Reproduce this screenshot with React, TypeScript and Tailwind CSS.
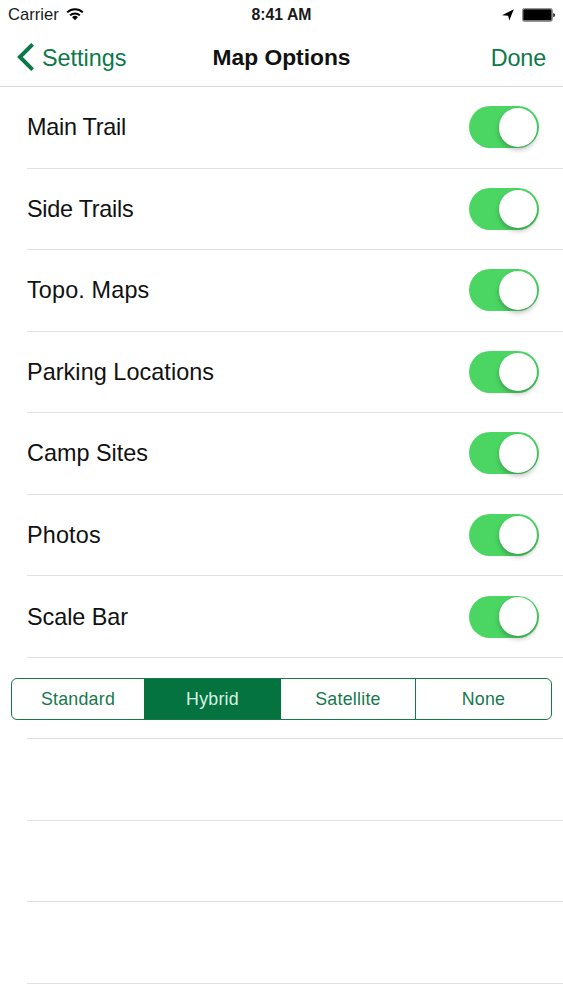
const options = [
  { label: 'Main Trail', tracking: 'tracking-[-0.25px]' },
  { label: 'Side Trails', tracking: 'tracking-[-0.25px]' },
  { label: 'Topo. Maps', tracking: 'tracking-[0.15px]' },
  { label: 'Parking Locations', tracking: 'tracking-[0.07px]' },
  { label: 'Camp Sites', tracking: 'tracking-normal' },
  { label: 'Photos', tracking: 'tracking-[0.15px]' },
  { label: 'Scale Bar', tracking: 'tracking-[-0.05px]' },
];

const mapTypes = [
  { label: 'Standard', width: 'w-[132px]' },
  { label: 'Hybrid', width: 'w-[137px]' },
  { label: 'Satellite', width: 'w-[134px]' },
  { label: 'None', width: 'flex-1' },
];

function StatusBar() {
  return (
    <div className="grid h-7 grid-cols-3 items-center px-2">
      <div className="flex items-center gap-[7px]">
        <span className="pt-px text-[16.6px] leading-7 text-[#1a1a1a]">Carrier</span>
        <svg className="h-[13px] w-[18px]" viewBox="0 0 18 13" fill="none" stroke="#000" strokeWidth="2">
          <path d="M1.2 4.4a11.1 11.1 0 0 1 15.6 0" />
          <path d="M4.1 7.4a7 7 0 0 1 9.8 0" />
          <path d="M9 12.2 6.1 9.3a4.1 4.1 0 0 1 5.8 0Z" fill="#000" stroke="none" />
        </svg>
      </div>
      <span className="pt-px text-center text-[15.8px] leading-7 font-bold text-[#1a1a1a]">8:41 AM</span>
      <div className="flex items-center justify-end gap-2">
        <svg className="h-3 w-3" viewBox="0 0 12 12" fill="#000">
          <path d="M11.8.3 7.3 11.6 6.2 6.7 0 6.3Z" />
        </svg>
        <svg className="h-[14px] w-[33px]" viewBox="0 0 33 14">
          <rect x="0.4" y="0.4" width="30" height="13" rx="2" fill="#fff" stroke="#555" strokeWidth="0.7" />
          <rect x="1.2" y="1.2" width="28.4" height="11.4" rx="1.2" fill="#000" />
          <path d="M31.3 4.9a2.3 2.3 0 0 1 0 4.4Z" fill="#000" />
        </svg>
      </div>
    </div>
  );
}

function NavBar() {
  return (
    <div className="grid h-[58px] grid-cols-[1fr_auto_1fr] items-center pr-[17px] pl-[17px] text-[23.4px]">
      <button className="flex items-center gap-[7px] text-[#0c7849]">
        <svg className="h-[28px] w-[18px]" viewBox="0 0 18 28" fill="none" stroke="currentColor" strokeWidth="4">
          <path d="M15.6 1.4 2.9 14 15.6 26.6" />
        </svg>
        <span className="pt-[3px]">Settings</span>
      </button>
      <h1 className="pt-px text-[22.8px] font-bold text-[#111]">Map Options</h1>
      <button className="justify-self-end pt-[3px] tracking-[-0.15px] text-[#0c7849]">Done</button>
    </div>
  );
}

function Toggle() {
  return (
    <button
      role="switch"
      aria-checked="true"
      className="flex h-[42px] w-[70px] items-center justify-end overflow-visible rounded-full bg-[#4bd663] pr-[2px]"
    >
      <span className="size-[38.5px] rounded-full bg-white shadow-[0_3px_5px_rgba(0,0,0,0.25)]" />
    </button>
  );
}

export default function App() {
  return (
    <div className="h-[1000px] w-[563px] overflow-hidden bg-white font-['Liberation_Sans',Arial,sans-serif] text-black">
      <header className="h-[87px] border-b border-[#d8d8d8]">
        <StatusBar />
        <NavBar />
      </header>
      <main className="pl-[27px]">
        {options.map(({ label, tracking }) => (
          <div
            key={label}
            className="flex h-[81.55px] items-center justify-between border-b border-[#e2e2e4] pr-6"
          >
            <span className={`text-[23.4px] leading-7 text-[#111] ${tracking}`}>{label}</span>
            <Toggle />
          </div>
        ))}
        <div className="flex h-[81.55px] items-center border-b border-[#e2e2e4] pt-px pr-[11px]">
          <div className="-ml-4 flex h-[42px] flex-1 overflow-hidden rounded-[6px] border-[1.5px] border-[#16794c]">
            {mapTypes.map(({ label, width }) => (
              <button
                key={label}
                className={`${width} pt-px text-[17.8px] tracking-[0.25px] ${
                  label === 'Hybrid' ? 'bg-[#05733f] text-[#d9f3e3]' : 'text-[#16794c]'
                } ${label === 'None' ? 'border-l-[1.5px] border-[#16794c]' : ''}`}
              >
                {label}
              </button>
            ))}
          </div>
        </div>
        <div className="h-[81.55px] border-b border-[#e2e2e4]" />
        <div className="h-[81.55px] border-b border-[#e2e2e4]" />
        <div className="h-[81.55px] border-b border-[#e2e2e4]" />
      </main>
    </div>
  );
}
